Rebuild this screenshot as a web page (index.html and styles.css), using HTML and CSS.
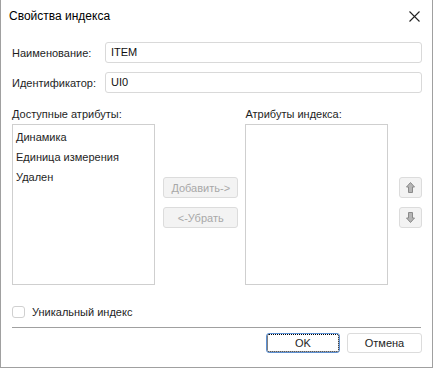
FILE: index.html
```html
<!DOCTYPE html>
<html lang="ru">
<head>
  <meta charset="UTF-8" />
  <title>Свойства индекса</title>
  <link rel="stylesheet" href="styles.css">
</head>
<body>
  <div class="dialog">
    <div class="titlebar">
      <span class="title">Свойства индекса</span>
      <svg class="close" width="11" height="11" viewBox="0 0 11 11">
        <path d="M0.5 0.5 L10.5 10.5 M10.5 0.5 L0.5 10.5" stroke="#222" stroke-width="1.1" fill="none"/>
      </svg>
    </div>

    <div class="content">
      <div class="field">
        <label class="field-label">Наименование:</label>
        <div class="input">ITEM</div>
      </div>
      <div class="field">
        <label class="field-label">Идентификатор:</label>
        <div class="input">UI0</div>
      </div>

      <div class="attrs">
        <div class="list-col">
          <div class="list-label">Доступные атрибуты:</div>
          <div class="list">
            <div class="list-item">Динамика</div>
            <div class="list-item">Единица измерения</div>
            <div class="list-item">Удален</div>
          </div>
        </div>

        <div class="move-col">
          <button class="btn disabled">Добавить-&gt;</button>
          <button class="btn disabled">&lt;-Убрать</button>
        </div>

        <div class="list-col">
          <div class="list-label">Атрибуты индекса:</div>
          <div class="list"></div>
        </div>

        <div class="order-col">
          <button class="btn icon-btn">
            <svg width="9" height="11" viewBox="0 0 9 11">
              <path d="M4.5 0.5 L8.5 5 L6.5 5 L6.5 10.5 L2.5 10.5 L2.5 5 L0.5 5 Z" fill="#b5b5b5" stroke="#8a8a8a" stroke-width="1"/>
            </svg>
          </button>
          <button class="btn icon-btn">
            <svg width="9" height="11" viewBox="0 0 9 11">
              <path d="M4.5 10.5 L8.5 6 L6.5 6 L6.5 0.5 L2.5 0.5 L2.5 6 L0.5 6 Z" fill="#b5b5b5" stroke="#8a8a8a" stroke-width="1"/>
            </svg>
          </button>
        </div>
      </div>

      <div class="unique">
        <span class="checkbox"></span>
        <span>Уникальный индекс</span>
      </div>

      <div class="separator"></div>

      <div class="actions">
        <button class="btn action default">OK</button>
        <button class="btn action">Отмена</button>
      </div>
    </div>
  </div>
</body>
</html>
```

FILE: styles.css
```css
* {
  box-sizing: border-box;
}

body {
  margin: 0;
  background: #fff;
  font-family: 'Liberation Sans', Arial, sans-serif;
  font-size: 11px;
  color: #1e1e1e;
}

.dialog {
  width: 433px;
  height: 368px;
  background: #fff;
  border: 1px solid #a0a0a0;
  border-top: none;
}

.titlebar {
  height: 32px;
  display: flex;
  align-items: center;
  justify-content: space-between;
  padding: 0 12px 0 8px;
}

.title {
  font-size: 12px;
  color: #000;
}

.content {
  padding: 10px 10px 0 11px;
}

.field {
  display: flex;
  align-items: center;
  height: 21px;
  margin-bottom: 9px;
}

.field-label {
  width: 93px;
  flex: none;
}

.input {
  flex: 1;
  height: 21px;
  line-height: 19px;
  border: 1px solid #d9d9d9;
  border-radius: 3px;
  padding: 0 5px;
  color: #111;
}

.attrs {
  display: flex;
  margin-top: 13px;
}

.list-col {
  width: 143px;
  flex: none;
}

.list-label {
  height: 16px;
  line-height: 16px;
  margin-bottom: 2px;
}

.list {
  height: 161px;
  border: 1px solid #cfcfcf;
  padding: 2px 3px;
}

.list-item {
  height: 20px;
  line-height: 20px;
}

.move-col {
  width: 77px;
  margin: 71px 7px 0 8px;
  display: flex;
  flex-direction: column;
  gap: 9px;
}

.order-col {
  width: 23px;
  margin: 71px 0 0 11px;
  display: flex;
  flex-direction: column;
  gap: 9px;
}

.btn {
  font-family: inherit;
  font-size: 11px;
  height: 21px;
  background: #f3f3f3;
  border: 1px solid #dcdcdc;
  border-radius: 3px;
  color: #1e1e1e;
  padding: 0;
}

.btn.disabled {
  color: #a8a8a8;
}

.icon-btn {
  display: flex;
  align-items: center;
  justify-content: center;
}

.unique {
  display: flex;
  align-items: center;
  gap: 7px;
  margin-top: 20px;
  height: 13px;
}

.checkbox {
  width: 13px;
  height: 12px;
  border: 1px solid #d0d0d0;
  border-radius: 3px;
  background: #fff;
}

.separator {
  height: 1px;
  background: #a0a0a0;
  margin: 9px 1px 0 0;
}

.actions {
  display: flex;
  justify-content: flex-end;
  gap: 7px;
  margin-top: 5px;
}

.action {
  width: 75px;
  height: 20px;
  background: #fff;
}

.action.default {
  width: 74px;
  border-color: #5b8fd2;
  outline: 1px dotted #000;
  outline-offset: -2px;
}
```
